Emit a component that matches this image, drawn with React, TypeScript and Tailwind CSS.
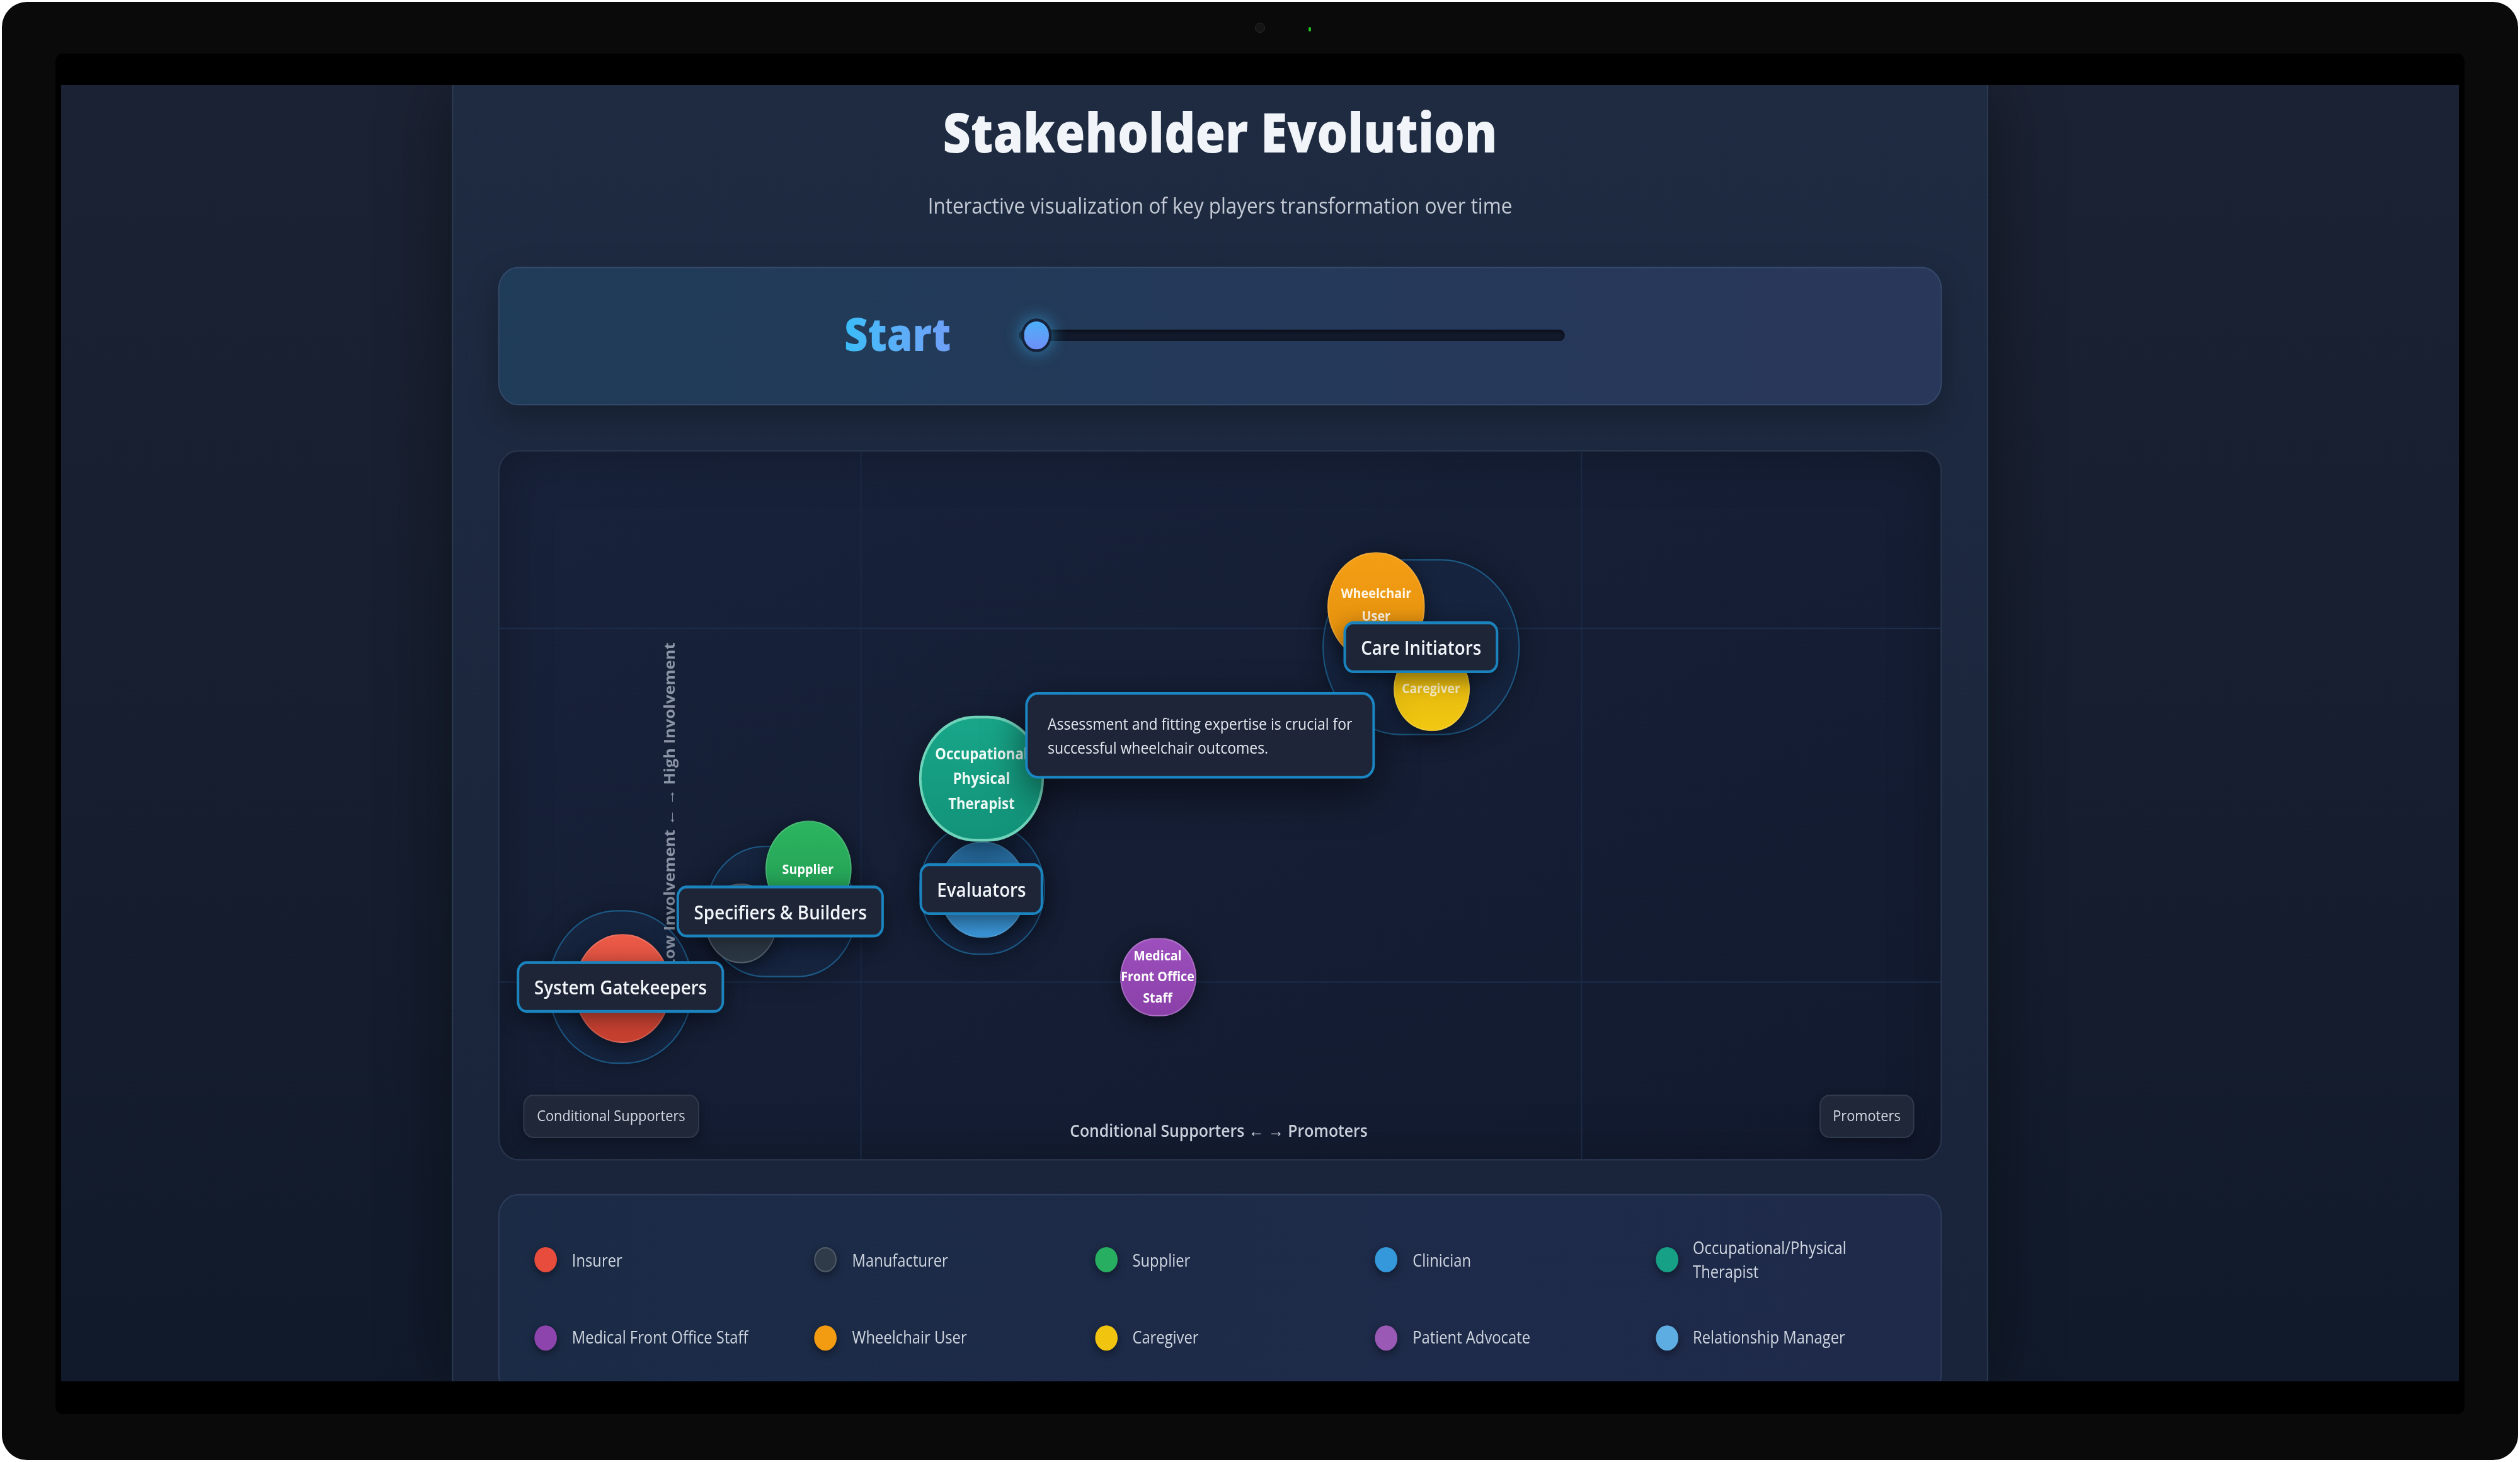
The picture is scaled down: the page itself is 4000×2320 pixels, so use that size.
import React from "react";

type Bubble = {
  name: string;
  lines: string[];
  cx: number;
  cy: number;
  w: number;
  h: number;
  cls: string;
  text: string;
};

type Group = { name: string; cx: number; cy: number; hw: number; hh: number };

// chart coordinates are in page px, relative to the chart card
const groups: Group[] = [
  { name: "System Gatekeepers", cx: 97, cy: 383, hw: 116, hh: 110 },
  { name: "Specifiers & Builders", cx: 225, cy: 329, hw: 121, hh: 94 },
  { name: "Evaluators", cx: 386, cy: 313, hw: 101, hh: 94 },
  { name: "Care Initiators", cx: 738, cy: 140, hw: 158, hh: 126 },
];

const bubbles: Bubble[] = [
  { name: "insurer", lines: [], cx: 98, cy: 384, w: 77, h: 78, cls: "bg-linear-to-b from-[#ec5a48] to-[#c83f2f] border border-white/15", text: "" },
  { name: "manufacturer", lines: [], cx: 193, cy: 338, w: 57, h: 57, cls: "bg-linear-to-b from-[#3b4653] to-[#2b3744] border border-[#56616e]", text: "" },
  { name: "supplier", lines: ["Supplier"], cx: 247, cy: 299, w: 69, h: 69, cls: "bg-linear-to-b from-[#2cb560] to-[#229a52] border border-white/15", text: "text-[10px] leading-[15px] text-white" },
  { name: "clinician", lines: [], cx: 387, cy: 314, w: 70, h: 69, cls: "bg-linear-to-b from-[#2a76b0] to-[#3b97da] border border-white/10", text: "" },
  { name: "ot", lines: ["Occupational", "Physical", "Therapist"], cx: 386, cy: 234, w: 100, h: 90, cls: "bg-linear-to-b from-[#18a689] to-[#129379] border-2 border-[#6fd3ba] shadow-[0_8px_24px_rgba(0,0,0,0.5)]", text: "text-[11.2px] leading-[17.8px] text-[#eefaf6]" },
  { name: "mfos", lines: ["Medical", "Front Office", "Staff"], cx: 527, cy: 376, w: 61, h: 56, cls: "bg-linear-to-b from-[#9d50bd] to-[#8a3fa8] border border-white/20", text: "text-[9.9px] leading-[15px] text-white" },
  { name: "wheelchair", lines: ["Wheelchair", "User"], cx: 702, cy: 111, w: 78, h: 78, cls: "bg-linear-to-b from-[#f49e14] to-[#e3900c] border border-white/15 pb-[4px]", text: "text-[10px] leading-[16px] text-[#fff6e6]" },
  { name: "caregiver", lines: ["Caregiver"], cx: 746, cy: 170, w: 61, h: 60, cls: "bg-linear-to-b from-[#dcae0e] to-[#f2c811] border border-white/15", text: "text-[9.8px] leading-[15px] text-white/75" },
];

const legend = [
  { name: "Insurer", dot: "bg-[#e74c3c]" },
  { name: "Manufacturer", dot: "bg-[#2f3b49] border border-[#4f5a67]" },
  { name: "Supplier", dot: "bg-[#27ae60]" },
  { name: "Clinician", dot: "bg-[#3498db]" },
  { name: "Occupational/Physical Therapist", dot: "bg-[#16a085]" },
  { name: "Medical Front Office Staff", dot: "bg-[#8e44ad]" },
  { name: "Wheelchair User", dot: "bg-[#f39c12]" },
  { name: "Caregiver", dot: "bg-[#f1c40f]" },
  { name: "Patient Advocate", dot: "bg-[#9b59b6]" },
  { name: "Relationship Manager", dot: "bg-[#5dade2]" },
];

const pill =
  "flex h-[31px] items-center rounded-lg border border-[#2f3a4d] bg-[#1f2738] px-[10px] text-[11px] text-[#d3d9e2] shadow-[0_3px_8px_rgba(0,0,0,0.35)]";

function Chart() {
  return (
    <div className="relative mt-8 h-[508px] rounded-2xl border border-[#28354d] bg-linear-to-br from-[#18223a] to-[#121a2f] shadow-[inset_0_0_40px_rgba(0,0,0,0.25)]">
      {/* quadrant grid */}
      <div className="absolute top-0 bottom-0 left-[25%] w-px bg-[#1b2944]" />
      <div className="absolute top-0 bottom-0 left-[75%] w-px bg-[#1b2944]" />
      <div className="absolute left-0 right-0 top-[25%] h-px bg-[#1c2c4a]" />
      <div className="absolute left-0 right-0 top-[75%] h-px bg-[#1c2c4a]" />

      {groups.map((g) => (
        <div
          key={g.name + "-halo"}
          className="absolute rounded-full border border-[#1d5a86] bg-[#163253]/30 shadow-[0_0_20px_rgba(0,0,0,0.25)]"
          style={{ left: g.cx - g.hw / 2, top: g.cy - g.hh / 2, width: g.hw, height: g.hh }}
        />
      ))}

      <div className="absolute left-[136px] top-[253px] -translate-x-1/2 -translate-y-1/2 -rotate-90 whitespace-nowrap text-[11.5px] font-bold text-[#8a94a5]">
        Low Involvement ← → High Involvement
      </div>

      {bubbles.map((b) => (
        <div
          key={b.name}
          className={"absolute flex flex-col items-center justify-center rounded-full text-center font-bold shadow-[0_4px_14px_rgba(0,0,0,0.45)] " + b.cls}
          style={{ left: b.cx - b.w / 2, top: b.cy - b.h / 2, width: b.w, height: b.h }}
        >
          {b.lines.map((l) => (
            <span key={l} className={"whitespace-nowrap " + b.text}>
              {l}
            </span>
          ))}
        </div>
      ))}

      {groups.map((g) => (
        <div
          key={g.name}
          className="absolute flex h-[37px] -translate-x-1/2 -translate-y-1/2 items-center whitespace-nowrap rounded-lg border-2 border-[#1b84bf] bg-[#1e2537] px-[12px] text-[14px] font-semibold text-[#f1f5f9] shadow-[0_4px_16px_rgba(0,0,0,0.45)]"
          style={{ left: g.cx, top: g.cy }}
        >
          {g.name}
        </div>
      ))}

      {/* tooltip of the hovered bubble */}
      <div className="absolute left-[421px] top-[172px] flex h-[62px] w-[280px] flex-col justify-center rounded-[10px] border-2 border-[#1a86c3] bg-[#1e2538] px-[16px] text-[11.6px] leading-[17.2px] text-[#e5e9f0] shadow-[0_10px_30px_rgba(0,0,0,0.55)]">
        <span className="whitespace-nowrap">Assessment and fitting expertise is crucial for</span>
        <span className="whitespace-nowrap">successful wheelchair outcomes.</span>
      </div>

      {/* x axis row */}
      <div className="absolute left-[19px] right-[21px] top-[460px] grid grid-cols-[1fr_auto_1fr] items-start">
        <div className={"justify-self-start " + pill}>Conditional Supporters</div>
        <div className="mt-[17px] whitespace-nowrap text-[12.5px] font-semibold leading-[17px] text-[#c9d0db]">
          Conditional Supporters ← → Promoters
        </div>
        <div className={"justify-self-end " + pill}>Promoters</div>
      </div>
    </div>
  );
}

function Page() {
  return (
    <div className="h-[927px] w-[1920px] origin-top-left overflow-hidden bg-linear-to-b from-[#1b2233] to-[#111a2b] font-['Open_Sans',sans-serif] [transform:scale(1.98229,2.21899)]">
      <div className="ml-[313px] h-full w-[1230px] border-x border-[#2a3b53] bg-linear-to-b from-[#1e2b41] to-[#19233a] px-[36px] pt-[9px] shadow-[0_0_50px_rgba(0,0,0,0.4)]">
        <h1 className="text-center text-[38.8px] font-extrabold leading-[48px] text-[#f1f5f9]">
          Stakeholder Evolution
        </h1>
        <p className="mt-[19px] text-center text-[15.8px] leading-[21.9px] text-[#c3cad5]">
          Interactive visualization of key players transformation over time
        </p>

        <div className="mt-[32px] flex h-[99px] items-center rounded-2xl border border-[#33486a] bg-linear-to-r from-[#1f3c58] to-[#29375b] pl-[276px] shadow-[0_8px_24px_rgba(0,0,0,0.25)]">
          <div className="w-[140px] bg-linear-to-r from-[#38bdf8] to-[#818cf8] bg-clip-text pb-[2px] text-[33px] font-extrabold leading-[44px] text-transparent">
            <span>Start</span>
          </div>
          <div className="relative h-[8px] w-[437px] rounded-full bg-[#121a2c] shadow-[inset_0_1px_3px_rgba(0,0,0,0.6)]">
            <div className="absolute left-[2px] top-1/2 h-[24px] w-[24px] -translate-y-1/2 rounded-full border-2 border-[#16213a] bg-linear-to-b from-[#4aaef8] to-[#6d8ff8] shadow-[0_0_12px_rgba(56,189,248,0.6)]" />
          </div>
        </div>

        <Chart />

        <div className="mt-6 grid grid-cols-5 gap-x-4 gap-y-[13px] rounded-2xl border border-[#2d3c5a] bg-linear-to-r from-[#1b2b46] to-[#1f2a4b] px-6 pb-6 pt-[21px]">
          {legend.map((item) => (
            <div key={item.name} className="flex items-center gap-3 px-1 py-2">
              <span className={"h-[18px] w-[18px] shrink-0 rounded-full shadow-[0_2px_6px_rgba(0,0,0,0.45)] " + item.dot} />
              <span className="text-[12px] font-medium leading-[17.3px] text-[#cfd6e0]">{item.name}</span>
            </div>
          ))}
        </div>
      </div>
    </div>
  );
}

export default function App() {
  return (
    <div className="h-[2320px] w-[4000px] bg-white p-[3px]">
      <div className="flex h-full w-full flex-col rounded-[40px] bg-[#0a0a0a]">
        <div className="relative flex h-[82px] items-center justify-center">
          <div className="h-[16px] w-[16px] rounded-full border border-[#2a2a2a] bg-[#151515]" />
          <div className="absolute left-[2074px] top-[40px] h-[7px] w-[4px] rounded-full bg-[#1fc21f]" />
        </div>
        <div className="mx-[85px] h-[2159px] rounded-[12px] bg-black pl-[9px] pr-[10px] pt-[50px]">
          <div className="h-[2057px] w-[3806px] overflow-hidden">
            <Page />
          </div>
        </div>
      </div>
    </div>
  );
}
